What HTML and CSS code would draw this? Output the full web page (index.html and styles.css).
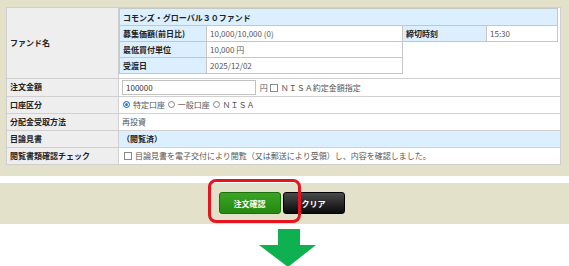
FILE: index.html
```html
<!DOCTYPE html>
<html lang="ja">
<head>
    <meta charset="UTF-8">
    <meta name="viewport" content="width=device-width, initial-scale=1.0">
    <title>注文入力</title>
    <link rel="stylesheet" href="styles.css">
</head>
<body>
    <div class="panel">
        <table class="order">
            <tr>
                <th class="fund-label">ファンド名</th>
                <td class="fund-cell">
                    <table class="fund">
                        <tr>
                            <th colspan="4" class="fund-title">コモンズ・グローバル３０ファンド</th>
                        </tr>
                        <tr>
                            <th class="c1">募集価額(前日比)</th>
                            <td class="c2">10,000/10,000 (0)</td>
                            <th class="c3">締切時刻</th>
                            <td class="c4">15:30</td>
                        </tr>
                        <tr>
                            <th class="c1">最低買付単位</th>
                            <td class="c2">10,000 円</td>
                            <td class="blank" colspan="2"></td>
                        </tr>
                        <tr>
                            <th class="c1">受渡日</th>
                            <td class="c2">2025/12/02</td>
                            <td class="blank" colspan="2"></td>
                        </tr>
                    </table>
                </td>
            </tr>
            <tr>
                <th>注文金額</th>
                <td class="amount">
                    <span class="text-input">100000</span>
                    <span>円</span><span class="check"></span><span>ＮＩＳＡ約定金額指定</span>
                </td>
            </tr>
            <tr>
                <th>口座区分</th>
                <td>
                    <span class="radio on"></span>特定口座
                    <span class="radio"></span>一般口座
                    <span class="radio"></span>ＮＩＳＡ
                </td>
            </tr>
            <tr>
                <th>分配金受取方法</th>
                <td>再投資</td>
            </tr>
            <tr>
                <th>目論見書</th>
                <td class="note">（閲覧済）</td>
            </tr>
            <tr>
                <th>閲覧書類確認チェック</th>
                <td><span class="check"></span>目論見書を電子交付により閲覧（又は郵送により受領）し、内容を確認しました。</td>
            </tr>
        </table>
    </div>

    <div class="button-bar">
        <div class="confirm-wrap">
            <button class="btn btn-confirm">注文確認</button>
            <span class="highlight-frame"></span>
        </div>
        <button class="btn btn-clear">クリア</button>
    </div>

    <div class="arrow">
        <svg width="60" height="38" viewBox="0 0 60 38">
            <polygon points="21,0 43,0 43,16 59,16 31,38 2,16 21,16" fill="#0fb04f"/>
        </svg>
    </div>
</body>
</html>
```

FILE: styles.css
```css
body {
    margin: 0;
    background-color: #fff;
    font-family: "Noto Sans CJK JP", "Liberation Sans", sans-serif;
    font-size: 8px;
    color: #555;
}
.panel {
    background-color: #e3e1c9;
    padding: 7px 8px 11px 6px;
}
.order {
    width: 100%;
    border-collapse: collapse;
    background-color: #fff;
    border: 1px solid #c6c6c6;
}
.order > tbody > tr > th,
.order > tbody > tr > td {
    border: 1px solid #d0d0d0;
    height: 16px;
    padding: 0 3px;
    text-align: left;
    line-height: 16px;
}
.order > tbody > tr > th {
    width: 105px;
    background-color: #eeeeee;
    color: #222;
    font-weight: bold;
}
.order > tbody > tr > td.fund-cell {
    padding: 0 2px 4px 0;
    vertical-align: top;
}
.fund {
    width: 100%;
    border-collapse: collapse;
}
.fund th,
.fund td {
    height: 15px;
    line-height: 15px;
    padding: 0 3px;
    text-align: left;
    border: 1px solid #c6c6c6;
}
.fund th.fund-title {
    height: 16px;
}
.fund th {
    background-color: #dcefff;
    color: #222;
    font-weight: bold;
}
.fund .c1 { width: 80px; }
.fund .c2 { width: 189px; }
.fund .c3 { width: 77px; }
.fund td.blank {
    border: none;
    border-left: 1px solid #c6c6c6;
}
.text-input {
    display: inline-block;
    width: 126px;
    height: 13px;
    line-height: 13px;
    padding: 0 3px;
    margin-right: 2px;
    border: 1px solid #c2c2c2;
    color: #333;
    vertical-align: middle;
}
.amount span {
    vertical-align: middle;
}
.check {
    display: inline-block;
    width: 6px;
    height: 6px;
    margin: 0 3px 0 2px;
    border: 1px solid #888;
    background-color: #fff;
    vertical-align: -1px;
}
.radio {
    display: inline-block;
    width: 5px;
    height: 5px;
    margin: 0 3px 0 1px;
    border: 1px solid #888;
    border-radius: 50%;
    vertical-align: 0;
}
.radio.on {
    border-color: #1f7ee8;
    background-color: #1f7ee8;
    box-shadow: inset 0 0 0 1px #fff;
}
.order > tbody > tr > td.note {
    background-color: #dcefff;
    color: #222;
    font-weight: bold;
}
.button-bar {
    margin-top: 7px;
    background-color: #e3e1c9;
    height: 41px;
    display: flex;
    justify-content: center;
    align-items: center;
    gap: 2px;
    padding-right: 6px;
}
.confirm-wrap {
    position: relative;
}
.btn {
    display: block;
    width: 62px;
    height: 22px;
    border-radius: 3px;
    font-family: "Noto Sans CJK JP", sans-serif;
    font-size: 8px;
    font-weight: bold;
    color: #fff;
    cursor: pointer;
}
.btn-confirm {
    background: linear-gradient(#3aa525, #25880f);
    border: 1px solid #1d6e0c;
}
.btn-clear {
    background: linear-gradient(#4a4a4a, #0a0a0a);
    border: 1px solid #000;
}
.highlight-frame {
    position: absolute;
    left: -11px;
    top: -13px;
    width: 87px;
    height: 38px;
    border: 3px solid #e5141e;
    border-radius: 8px;
    pointer-events: none;
}
.arrow {
    display: flex;
    justify-content: center;
    padding-left: 5px;
    margin-top: 5px;
}
.arrow svg {
    display: block;
}
```
